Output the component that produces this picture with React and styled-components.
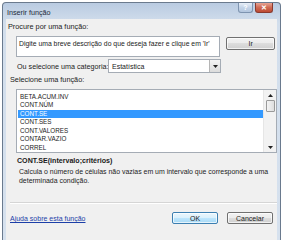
import React from "react";
import styled, { createGlobalStyle } from "styled-components";

const Global = createGlobalStyle`
  html, body { margin: 0; padding: 0; background: #ffffff; overflow: hidden; }
  body { font-family: "Liberation Sans", Arial, sans-serif; }
`;

const Window = styled.div`
  margin: 2px 0 0 2px;
  width: 279px;
  height: 238px;
  box-sizing: border-box;
  border: 1px solid #6a7a8e;
  border-bottom: none;
  border-radius: 4px 4px 0 0;
  background: linear-gradient(#b9cbe2, #d2deec 20px, #d6e1ee);
  display: flex;
  flex-direction: column;
  padding: 0 3px;
`;

const TitleBar = styled.div`
  height: 16px;
  display: flex;
  align-items: flex-start;
`;

const Title = styled.div`
  font-size: 7.2px;
  color: #1e2a3a;
  margin: 5px 0 0 1px;
  flex: 1;
`;

const CapButton = styled.div`
  width: ${(p) => p.$w}px;
  height: 10px;
  box-sizing: border-box;
  border: 1px solid ${(p) => (p.$close ? "#8a3a2e" : "#7e94b0")};
  border-top: none;
  border-radius: 0 0 3px 3px;
  margin-right: ${(p) => p.$mr || 0}px;
  background: ${(p) =>
    p.$close
      ? "linear-gradient(#e7a393, #cf6a54 50%, #bd4a33)"
      : "linear-gradient(#e8eff8, #c4d4e8 50%, #b3c6de)"};
  color: #fff;
  font-size: 7px;
  font-weight: bold;
  display: flex;
  align-items: center;
  justify-content: center;
`;

const Client = styled.div`
  flex: 1;
  background: #f0f0f0;
  display: flex;
  flex-direction: column;
  padding: 0 2px;
  color: #222;
  font-size: 7px;
`;

const Label = styled.div`
  height: 8px;
  line-height: 8px;
  margin: ${(p) => p.$mt}px 0 0 ${(p) => p.$ml}px;
  font-size: 7.3px;
  color: #222;
  white-space: nowrap;
`;

const Row = styled.div`
  display: flex;
  align-items: ${(p) => p.$align || "center"};
  margin-top: ${(p) => p.$mt}px;
`;

const SearchBox = styled.div`
  margin-left: 8px;
  width: 205px;
  height: 21px;
  box-sizing: border-box;
  border: 1px solid #a5acb5;
  background: #fff;
  padding: 3px 0 0 2px;
  font-size: 6.85px;
  line-height: 8px;
  color: #222;
  white-space: nowrap;
  overflow: hidden;
`;

const Button = styled.div`
  width: ${(p) => p.$w}px;
  height: ${(p) => p.$h || 12}px;
  box-sizing: border-box;
  margin-left: ${(p) => p.$ml || 0}px;
  margin-right: ${(p) => p.$mr || 0}px;
  margin-top: ${(p) => p.$mt || 0}px;
  border: 1px solid ${(p) => (p.$default ? "#3c7fb1" : "#707070")};
  border-radius: 2px;
  background: ${(p) =>
    p.$default
      ? "linear-gradient(#eaf6fd, #d9f0fc 50%, #bee6fd 50%, #a7d9f5)"
      : "linear-gradient(#f2f2f2, #ebebeb 50%, #dddddd 50%, #cfcfcf)"};
  box-shadow: inset 0 0 0 1px rgba(255, 255, 255, 0.7);
  font-size: 7px;
  color: #222;
  display: flex;
  align-items: center;
  justify-content: center;
`;

const CatLabel = styled.div`
  width: 91px;
  margin-left: 9px;
  font-size: 7.2px;
  white-space: nowrap;
`;

const Combo = styled.div`
  width: 113px;
  height: 14px;
  box-sizing: border-box;
  border: 1px solid #a5acb5;
  background: #fff;
  display: flex;
  align-items: stretch;
`;

const ComboText = styled.div`
  flex: 1;
  padding-left: 3px;
  font-size: 7px;
  display: flex;
  align-items: center;
`;

const ComboArrow = styled.div`
  width: 11px;
  box-sizing: border-box;
  border-left: 1px solid #b5b5b5;
  background: linear-gradient(#f4f4f4, #dcdcdc);
  display: flex;
  align-items: center;
  justify-content: center;
`;

const ListBox = styled.div`
  margin: 5px 0 0 8px;
  width: 261px;
  height: 64px;
  box-sizing: border-box;
  border: 1px solid #a5acb5;
  background: #fff;
  display: flex;
`;

const Items = styled.div`
  flex: 1;
  padding: 2.75px 0 0 1px;
`;

const Item = styled.div`
  height: 8.5px;
  line-height: 8.5px;
  padding-left: 2px;
  font-size: 6.3px;
  color: ${(p) => (p.$sel ? "#ffffff" : "#222")};
  background: ${(p) => (p.$sel ? "#3399ff" : "transparent")};
  white-space: nowrap;
`;

const ScrollBar = styled.div`
  width: 12px;
  display: flex;
  flex-direction: column;
  align-items: center;
  background: #f2f2f2;
  border-left: 1px solid #e6e6e6;
`;

const ScrollArrow = styled.div`
  height: 10px;
  display: flex;
  align-items: center;
  justify-content: center;
`;

const Thumb = styled.div`
  width: 9px;
  height: 12px;
  box-sizing: border-box;
  border: 1px solid #9a9a9a;
  border-radius: 1px;
  background: linear-gradient(90deg, #f4f4f4, #dedede);
`;

const Fill = styled.div`
  flex: 1;
`;

const Signature = styled.div`
  margin: 4px 0 0 9px;
  font-size: 7.1px;
  font-weight: bold;
  line-height: 8px;
  color: #1a1a1a;
  white-space: nowrap;
`;

const Desc = styled.div`
  margin: 2px 0 0 11px;
  font-size: 6.95px;
  line-height: 9px;
  color: #222;
  white-space: nowrap;
`;

const Separator = styled.div`
  margin: 17px 0 0 2px;
  width: 267px;
  height: 1px;
  background: #d5d5d5;
  border-bottom: 1px solid #fff;
`;

const Footer = styled.div`
  display: flex;
  align-items: center;
  margin-top: 8px;
  padding-left: 2px;
`;

const Link = styled.a`
  font-size: 7px;
  color: #1c3fa8;
  text-decoration: underline;
  flex: 1;
  margin-top: 1px;
`;

const Tri = ({ up }) => (
  <svg width="5" height="3" viewBox="0 0 5 3">
    <polygon points={up ? "0,3 5,3 2.5,0" : "0,0 5,0 2.5,3"} fill="#222" />
  </svg>
);

const items = [
  "BETA.ACUM.INV",
  "CONT.NÚM",
  "CONT.SE",
  "CONT.SES",
  "CONT.VALORES",
  "CONTAR.VAZIO",
  "CORREL",
];

export default function App() {
  return (
    <>
      <Global />
      <Window>
        <TitleBar>
          <Title>Inserir função</Title>
          <CapButton $w={15} $mr={2}>?</CapButton>
          <CapButton $w={18} $close $mr={4}>✕</CapButton>
        </TitleBar>
        <Client>
          <Label $mt={4} $ml={0}>Procure por uma função:</Label>
          <Row $align="flex-start" $mt={5}>
            <SearchBox>
              Digite uma breve descrição do que deseja fazer e clique em 'Ir'
            </SearchBox>
            <Button $w={49} $h={13} $ml={6} $mt={1}>Ir</Button>
          </Row>
          <Row $mt={2}>
            <CatLabel>Ou selecione uma categoria:</CatLabel>
            <Combo>
              <ComboText>Estatística</ComboText>
              <ComboArrow>
                <Tri />
              </ComboArrow>
            </Combo>
          </Row>
          <Label $mt={3} $ml={2}>Selecione uma função:</Label>
          <ListBox>
            <Items>
              {items.map((it) => (
                <Item key={it} $sel={it === "CONT.SE"}>
                  {it}
                </Item>
              ))}
            </Items>
            <ScrollBar>
              <ScrollArrow>
                <Tri up />
              </ScrollArrow>
              <Thumb />
              <Fill />
              <ScrollArrow>
                <Tri />
              </ScrollArrow>
            </ScrollBar>
          </ListBox>
          <Signature>CONT.SE(intervalo;critérios)</Signature>
          <Desc>
            Calcula o número de células não vazias em um intervalo que corresponde a uma
            <br />
            determinada condição.
          </Desc>
          <Separator />
          <Footer>
            <Link href="#">Ajuda sobre esta função</Link>
            <Button $w={46} $default>OK</Button>
            <Button $w={46} $ml={9} $mr={2}>Cancelar</Button>
          </Footer>
        </Client>
      </Window>
    </>
  );
}
